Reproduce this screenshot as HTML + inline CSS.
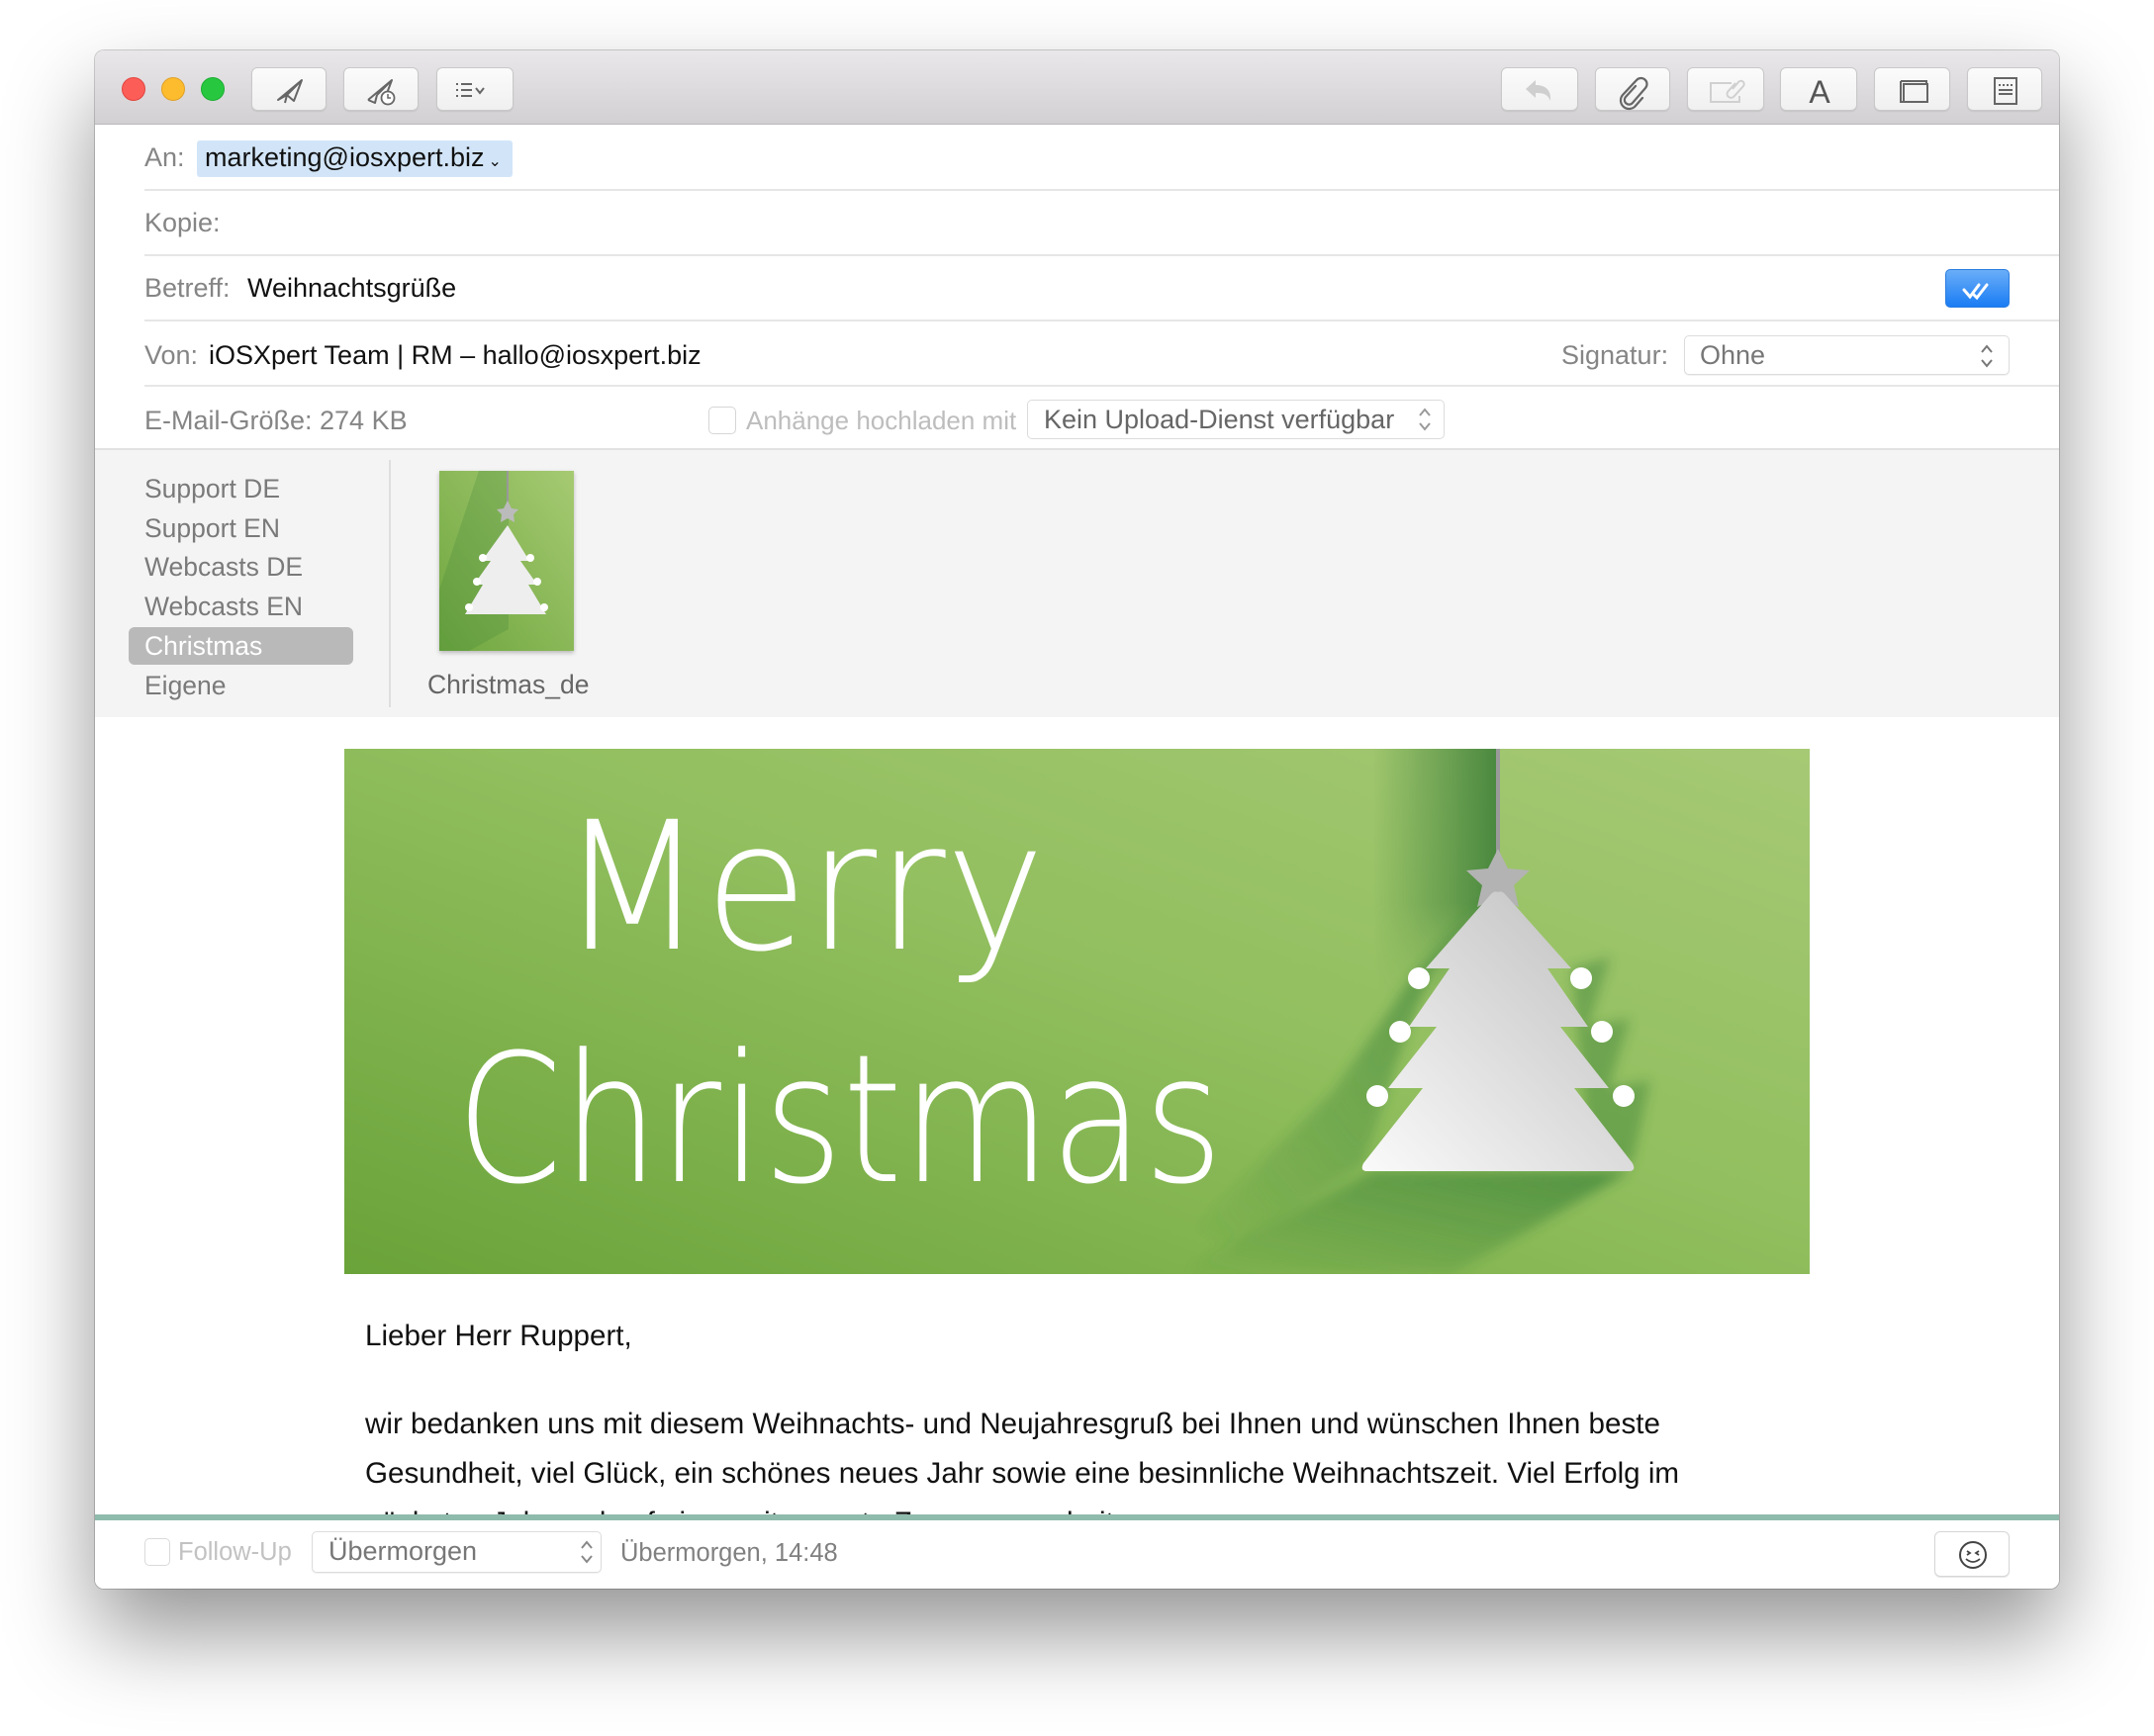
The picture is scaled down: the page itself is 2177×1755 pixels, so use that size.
<!DOCTYPE html>
<html><head><meta charset="utf-8">
<style>
*{margin:0;padding:0;box-sizing:border-box}
html,body{width:2177px;height:1755px;background:#fff;overflow:hidden;font-family:"Liberation Sans",sans-serif}
.win{position:absolute;left:96px;top:51px;width:1985px;height:1555px;background:#fff;border-radius:9px;box-shadow:0 45px 90px rgba(0,0,0,.42),0 0 0 1px rgba(0,0,0,.18);overflow:hidden}
.tb{position:absolute;left:0;top:0;width:100%;height:75px;background:linear-gradient(#e9e7e9,#d2d0d2);border-bottom:1px solid #b9b7b9}
.tl{position:absolute;top:27px;width:24px;height:24px;border-radius:50%}
.btn{position:absolute;top:17px;height:44px;background:linear-gradient(#fbfbfb,#f0f0f0);border:1px solid #c9c9c9;border-radius:6px;box-shadow:0 1px 1px rgba(0,0,0,.08)}
.btn svg{position:absolute;left:0;top:0}
.abs{position:absolute;white-space:nowrap}
.lbl{color:#858585;font-size:27px}
.val{color:#111;font-size:27px}
.sep{position:absolute;left:50px;right:0;height:2px;background:#e6e6e6}
.att{position:absolute;left:0;top:404px;width:100%;height:270px;background:#f4f4f4}
.side{position:absolute;left:50px;font-size:26.5px;color:#7a7a7a}
.body{position:absolute;left:273px;font-size:29.6px;color:#111;white-space:nowrap}
</style></head><body>
<div class="win">
 <div class="tb">
  <div class="tl" style="left:27px;background:#fc5d57;border:1px solid #e2443f"></div>
  <div class="tl" style="left:67px;background:#fdbb2e;border:1px solid #e0a126"></div>
  <div class="tl" style="left:107px;background:#27c840;border:1px solid #1dad33"></div>
  <div class="btn" style="left:158px;width:76px"><svg width="76" height="44"><path d="M26 32 L50 12 L42 33 L35 27 Z M35 27 L50 12 M35 27 L33 35" fill="none" stroke="#666" stroke-width="2" stroke-linejoin="round"/></svg></div>
  <div class="btn" style="left:251px;width:76px"><svg width="76" height="44"><path d="M24 32 L48 12 L42 28 M33 27 L48 12 M33 27 L31 35 L24 32" fill="none" stroke="#666" stroke-width="2" stroke-linejoin="round"/><circle cx="44" cy="30" r="6.5" fill="#fff" stroke="#666" stroke-width="1.8"/><path d="M44 26v4h3" stroke="#666" stroke-width="1.5" fill="none"/></svg></div>
  <div class="btn" style="left:345px;width:78px"><svg width="78" height="44"><g stroke="#666" stroke-width="2"><path d="M19 16h2M19 22h2M19 28h2M24 16h11M24 22h11M24 28h11"/><path d="M39 20l4 5 4-5" fill="none"/></g></svg></div>
  <div class="btn" style="left:1421px;width:78px"><svg width="78" height="44"><path d="M24 21 L34 12 L34 17 C44 17 50 22 49 33 C46 26 42 25 34 25 L34 30 Z" fill="#cfcfcf"/></svg></div>
  <div class="btn" style="left:1516px;width:76px"><svg width="76" height="44"><path d="M40 18 L30 29 a4.5 4.5 0 0 0 7 6 L50 20 a6 6 0 0 0 -9 -8 L27 27 a8.5 8.5 0 0 0 13 11 L47 30" fill="none" stroke="#666" stroke-width="2.2" stroke-linecap="round"/></svg></div>
  <div class="btn" style="left:1609px;width:78px"><svg width="78" height="44"><path d="M44 15H23v19h29v-6" fill="none" stroke="#d0d0d0" stroke-width="2"/><path d="M45 21 L51 14 a3 3 0 0 1 5 4 L46 29 a4 4 0 0 1 -6 -5 L48 15" fill="none" stroke="#d0d0d0" stroke-width="2"/></svg></div>
  <div class="btn" style="left:1703px;width:78px"><svg width="78" height="44"><text x="39" y="35" text-anchor="middle" font-family="Liberation Sans" font-size="32" fill="#555">A</text></svg></div>
  <div class="btn" style="left:1798px;width:77px"><svg width="77" height="44"><path d="M26 13h26v3M26 13v21h3" fill="none" stroke="#666" stroke-width="2"/><rect x="29" y="16" width="24" height="18" fill="none" stroke="#666" stroke-width="2"/></svg></div>
  <div class="btn" style="left:1892px;width:76px"><svg width="76" height="44"><rect x="27" y="10" width="22" height="26" fill="none" stroke="#666" stroke-width="2"/><path d="M31 17h2M35 17h2M39 17h2M43 17h2M31 22h14M31 26h14" stroke="#666" stroke-width="2"/></svg></div>
 </div>

 <div class="abs lbl" style="left:50px;top:93px">An:</div>
 <div class="abs" style="left:103px;top:91px;width:319px;height:37px;background:#d2e5f8;border-radius:3px"></div>
 <div class="abs val" style="left:111px;top:93px">marketing@iosxpert.biz<span style="font-size:16px;margin-left:4px">&#8964;</span></div>
 <div class="sep" style="top:140px"></div>
 <div class="abs lbl" style="left:50px;top:159px">Kopie:</div>
 <div class="sep" style="top:206px"></div>
 <div class="abs lbl" style="left:50px;top:225px">Betreff:</div>
 <div class="abs val" style="left:154px;top:225px">Weihnachtsgrüße</div>
 <div class="abs" style="left:1870px;top:221px;width:65px;height:39px;border-radius:5px;background:linear-gradient(#6aaef8,#1a7cf4);border:1px solid #2b7de0"><svg width="65" height="39"><path d="M18 20l6 7 9-12M28 25l3 3 10-13" fill="none" stroke="#fff" stroke-width="3" stroke-linecap="round"/></svg></div>
 <div class="sep" style="top:272px"></div>
 <div class="abs lbl" style="left:50px;top:293px">Von:</div>
 <div class="abs val" style="left:115px;top:293px">iOSXpert Team | RM – hallo@iosxpert.biz</div>
 <div class="abs lbl" style="left:1482px;top:293px">Signatur:</div>
 <div class="abs" style="left:1606px;top:288px;width:329px;height:40px;border:1px solid #dcdcdc;border-radius:5px;background:#fff;box-shadow:0 1px 1px rgba(0,0,0,.06)"></div>
 <div class="abs" style="left:1622px;top:293px;font-size:27px;color:#777">Ohne</div>
 <svg class="abs" style="left:1904px;top:295px" width="16" height="28"><path d="M3 10l5-6 5 6M3 18l5 6 5-6" fill="none" stroke="#777" stroke-width="2"/></svg>
 <div class="sep" style="top:338px"></div>
 <div class="abs lbl" style="left:50px;top:359px">E-Mail-Größe: 274 KB</div>
 <div class="abs" style="left:620px;top:360px;width:28px;height:28px;border:1px solid #d6d6d6;border-radius:5px;background:#fff"></div>
 <div class="abs" style="left:658px;top:359px;font-size:26px;color:#bdbdbd">Anhänge hochladen mit</div>
 <div class="abs" style="left:942px;top:353px;width:422px;height:40px;border:1px solid #dcdcdc;border-radius:5px;background:#fff"></div>
 <div class="abs" style="left:959px;top:358px;font-size:27px;color:#666">Kein Upload-Dienst verfügbar</div>
 <svg class="abs" style="left:1336px;top:359px" width="16" height="28"><path d="M3 10l5-6 5 6M3 18l5 6 5-6" fill="none" stroke="#999" stroke-width="2"/></svg>
 <div class="sep" style="top:402px;left:0;background:#e2e2e2"></div>

 <div class="att">
  <div class="side" style="top:24px">Support DE</div>
  <div class="side" style="top:64px">Support EN</div>
  <div class="side" style="top:103px">Webcasts DE</div>
  <div class="side" style="top:143px">Webcasts EN</div>
  <div class="abs" style="left:34px;top:179px;width:227px;height:38px;background:#b9b9b9;border-radius:6px"></div>
  <div class="side" style="top:183px;color:#fff">Christmas</div>
  <div class="side" style="top:223px">Eigene</div>
  <div class="abs" style="left:297px;top:10px;width:2px;height:250px;background:#dedede"></div>
  <svg class="abs" style="left:348px;top:21px;filter:drop-shadow(0 2px 2px rgba(0,0,0,.25))" width="136" height="182" viewBox="0 0 136 182">
   <defs><linearGradient id="tg" x1="0" y1="1" x2="1" y2="0"><stop offset="0" stop-color="#6ea63e"/><stop offset="1" stop-color="#a6ca72"/></linearGradient></defs>
   <rect width="136" height="182" fill="url(#tg)"/>
   <path d="M40 0h30v160l-40 22H0V120z" fill="#3f8436" opacity=".25"/>
   <line x1="69" y1="0" x2="69" y2="36" stroke="#999" stroke-width="2"/>
   <path d="M69 30l4 8 7 1-5 5 1 8-7-4-7 4 1-8-5-5 7-1z" fill="#bbb"/>
   <path d="M69 55l22 36h-9l17 24h-9l18 30H26l18-30h-9l17-24h-9z" fill="#eee"/>
   <g fill="#fff"><circle cx="44" cy="88" r="4"/><circle cx="92" cy="88" r="4"/><circle cx="38" cy="112" r="4"/><circle cx="99" cy="112" r="4"/><circle cx="30" cy="138" r="4"/><circle cx="106" cy="138" r="4"/></g>
  </svg>
  <div class="abs" style="left:336px;top:222px;font-size:26.5px;color:#666">Christmas_de</div>
 </div>

 <svg class="abs" style="left:252px;top:706px" width="1481" height="531" viewBox="0 0 1481 531">
  <defs>
   <linearGradient id="bg" x1="0" y1="1" x2="1" y2="0"><stop offset="0" stop-color="#6aa339"/><stop offset=".55" stop-color="#92bf5f"/><stop offset="1" stop-color="#a6c975"/></linearGradient>
   <linearGradient id="sh" x1="1" y1="0" x2="0" y2="1"><stop offset="0" stop-color="#2f7a33" stop-opacity=".8"/><stop offset="1" stop-color="#2f7a33" stop-opacity="0"/></linearGradient>
   <linearGradient id="vs" x1="1" y1="0" x2="0" y2="0"><stop offset="0" stop-color="#3a7d37"/><stop offset="1" stop-color="#3a7d37" stop-opacity="0"/></linearGradient>
   <linearGradient id="vf" x1="0" y1="0" x2="0" y2="1"><stop offset="0" stop-color="#fff"/><stop offset=".6" stop-color="#fff"/><stop offset="1" stop-color="#000"/></linearGradient>
   <mask id="vm"><rect x="1040" y="0" width="130" height="260" fill="url(#vf)"/></mask>
   <linearGradient id="tr" x1="0" y1="1" x2="1" y2="0"><stop offset="0" stop-color="#fafafa"/><stop offset="1" stop-color="#bdbdbd"/></linearGradient>
   <filter id="bl"><feGaussianBlur stdDeviation="6"/></filter>
  </defs>
  <rect width="1481" height="531" fill="url(#bg)"/>
  <rect x="1040" y="0" width="126" height="260" fill="url(#vs)" opacity=".85" mask="url(#vm)"/>
  <g filter="url(#bl)" opacity=".8">
   <path d="M1150 155 L1100 222 L1076 281 L1055 343 L1030 420 L900 505 L860 485 L1000 345 L1080 230 Z" fill="url(#sh)"/>
   <path d="M1040 427 L1300 427 L1120 531 L840 531 Z" fill="url(#sh)"/>
   <path d="M1240 222 L1280 210 L1257 281 L1300 272 L1278 343 L1320 335 L1302 419 L1260 420 Z" fill="#2f7a33" opacity=".5"/>
  </g>
  <line x1="1166" y1="0" x2="1166" y2="115" stroke="#9a9a9a" stroke-width="4"/>
  <path d="M1166 101l10 20 22 2-16 15 5 22-21-11-21 11 5-22-16-15 22-2z" fill="#b3b3b3"/>
  <path d="M1166 145 Q1170 143 1174 148 L1240 222 L1216 222 L1257 281 L1229 281 L1278 343 L1243 343 L1302 419 Q1306 427 1298 427 L1034 427 Q1026 427 1030 419 L1090 343 L1055 343 L1104 281 L1076 281 L1117 222 L1093 222 L1158 148 Q1162 143 1166 145 Z" fill="url(#tr)"/>
  <g fill="#fff"><circle cx="1086" cy="232" r="11"/><circle cx="1250" cy="232" r="11"/><circle cx="1067" cy="286" r="11"/><circle cx="1271" cy="286" r="11"/><circle cx="1044" cy="351" r="11"/><circle cx="1293" cy="351" r="11"/></g>
  <text x="218" y="202" textLength="490" lengthAdjust="spacingAndGlyphs" font-family="DejaVu Sans, Liberation Sans, sans-serif" font-weight="200" font-size="180" fill="#fff">Merry</text>
  <text x="113" y="437" textLength="775" lengthAdjust="spacingAndGlyphs" font-family="DejaVu Sans, Liberation Sans, sans-serif" font-weight="200" font-size="180" fill="#fff">Christmas</text>
 </svg>

 <div class="body" style="top:1283px">Lieber Herr Ruppert,</div>
 <div class="body" style="top:1372px">wir bedanken uns mit diesem Weihnachts- und Neujahresgruß bei Ihnen und wünschen Ihnen beste</div>
 <div class="body" style="top:1422px">Gesundheit, viel Glück, ein schönes neues Jahr sowie eine besinnliche Weihnachtszeit. Viel Erfolg im</div>
 <div class="body" style="top:1472px">nächsten Jahr und auf eine weitere gute Zusammenarbeit.</div>

 <div class="abs" style="left:0;top:1480px;width:100%;height:75px;background:#fff;border-top:6px solid #8fbbad"></div>
 <div class="abs" style="left:50px;top:1504px;width:26px;height:28px;border:1px solid #dadada;border-radius:5px"></div>
 <div class="abs" style="left:84px;top:1504px;font-size:25.5px;color:#c2c2c2">Follow-Up</div>
 <div class="abs" style="left:219px;top:1497px;width:293px;height:42px;border:1px solid #dcdcdc;border-radius:5px;box-shadow:0 1px 1px rgba(0,0,0,.06)"></div>
 <div class="abs" style="left:236px;top:1502px;font-size:27px;color:#777">Übermorgen</div>
 <svg class="abs" style="left:489px;top:1504px" width="16" height="28"><path d="M3 10l5-6 5 6M3 18l5 6 5-6" fill="none" stroke="#888" stroke-width="2"/></svg>
 <div class="abs" style="left:531px;top:1505px;font-size:25.5px;color:#808080">Übermorgen, 14:48</div>
 <div class="abs" style="left:1859px;top:1497px;width:76px;height:46px;border:1px solid #d6d6d6;border-radius:6px;box-shadow:0 1px 1px rgba(0,0,0,.1)"><svg width="76" height="46"><circle cx="38" cy="23" r="13" fill="none" stroke="#444" stroke-width="2"/><path d="M32 19l3 2-3 2M44 19l-3 2 3 2M31 27q7 6 14 0" fill="none" stroke="#444" stroke-width="1.8"/></svg></div>
</div>
</body></html>
